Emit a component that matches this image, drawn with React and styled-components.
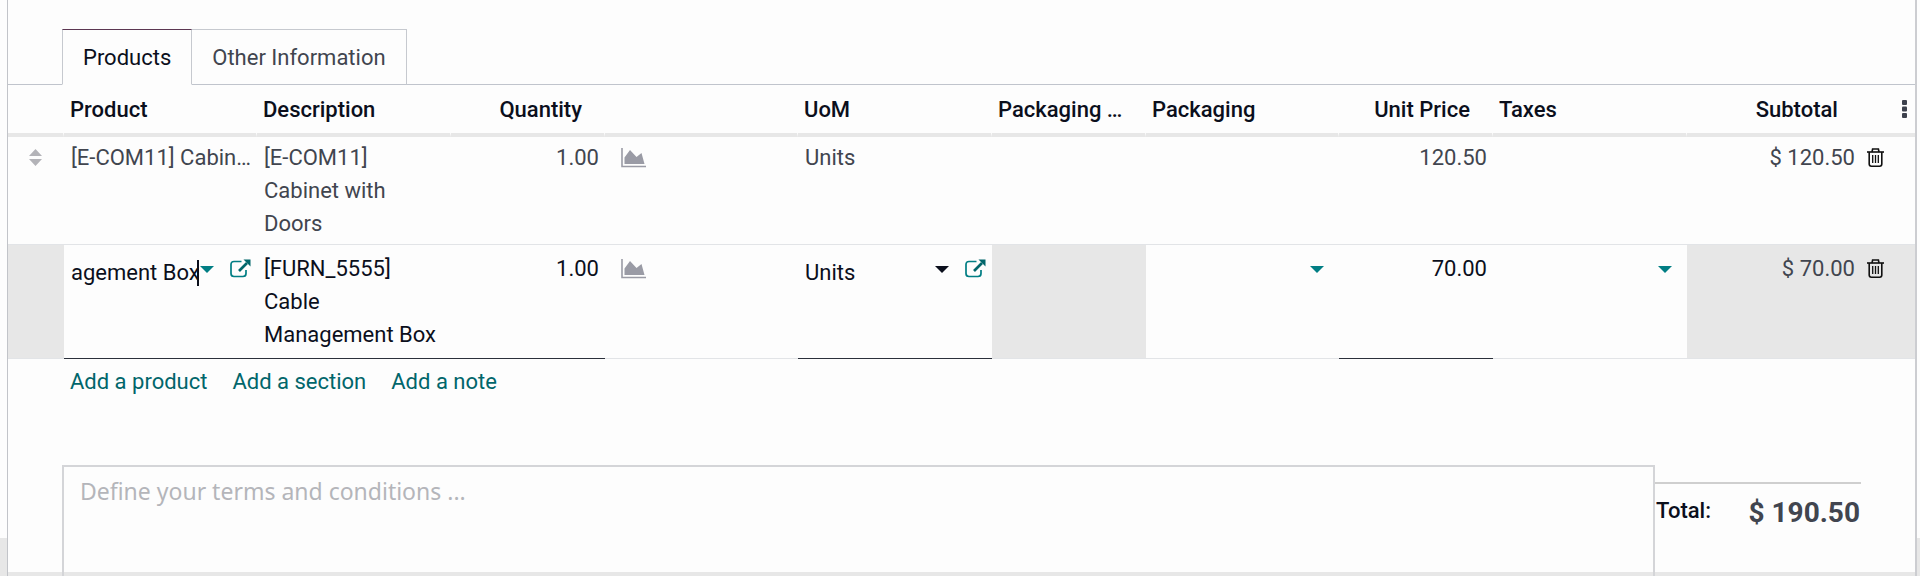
import React from 'react'
import { useState } from 'react';
import styled, { createGlobalStyle } from 'styled-components'

const columns=[56,193,194,154,193,194,154,193,154,194,173,55];

function AreaChartIcon() {
  return (
    <svg width="25" height="20" viewBox="0 0 25 20" aria-hidden="true">
        <path d="M1 0V18.5H25" fill="none" stroke="#9a9ba5" strokeWidth="1.6"/>
        <path d="M3.5 16V9.5L9 2L15.5 9L20.5 5L23.5 16Z" fill="#9a9ba5"/>
    </svg>
  )
}

function ExternalLinkIcon() {
  return (
    <svg width="21" height="19" viewBox="0 0 21 19" aria-hidden="true">
        <path d="M11.5 2.5H4Q1 2.5 1 5.5V14.5Q1 17.5 4 17.5H13Q16 17.5 16 14.5V11" fill="none" stroke="#017e84" strokeWidth="1.7"/>
        <path d="M9 12L17 4" fill="none" stroke="#01666b" strokeWidth="2.6"/>
        <path d="M13.5 0.5H20.5V7.5Z" fill="#01666b"/>
    </svg>
  )
}

function TrashIcon() {
  return (
    <svg width="17" height="19" viewBox="0 0 17 19" aria-hidden="true">
        <g fill="none" stroke="#111" strokeWidth="1.6">
            <path d="M0 4H17"/>
            <path d="M5 4L5.6 1H11.4L12 4"/>
            <path d="M2.2 4V16Q2.2 18.2 4.4 18.2H12.6Q14.8 18.2 14.8 16V4"/>
            <path d="M5.7 7V15M8.5 7V15M11.3 7V15" strokeWidth="1.3"/>
        </g>
    </svg>
  )
}

function SortIcon() {
  return (
    <svg width="13" height="17" viewBox="0 0 13 17" aria-hidden="true">
        <path d="M6.5 0L13 7H0ZM0 10H13L6.5 17Z" fill="#b3b3b8"/>
    </svg>
  )
}

function DotsIcon() {
  return (
    <svg width="5" height="18" viewBox="0 0 5 18" aria-hidden="true">
        <g fill="#3d414d">
            <rect width="5" height="5" rx="1"/>
            <rect y="6.5" width="5" height="5" rx="1"/>
            <rect y="13" width="5" height="5" rx="1"/>
        </g>
    </svg>
  )
}

function App() {

    const [product, setProduct]=useState('agement Box');
    const [uom, setUom]=useState('Units');
    const [quantity, setQuantity]=useState('1.00');
    const [price, setPrice]=useState('70.00');
    const [packaging, setPackaging]=useState('');
    const [taxes, setTaxes]=useState('');
    const [description, setDescription]=useState('[FURN_5555] Cable Management Box');
    const [terms, setTerms]=useState('');

  return (
    <Page>
        <GlobalStyle/>
        <Sheet>
            <Tabs role="tablist">
                <Tab role="tab" aria-selected="true" $active>Products</Tab>
                <Tab role="tab" aria-selected="false">Other Information</Tab>
            </Tabs>
            <Table>
                <colgroup>
                    {columns.map((w,i)=><Col key={i} $width={w}/>)}
                </colgroup>
                <thead>
                    <tr>
                        <Th></Th>
                        <Th>Product</Th>
                        <Th>Description</Th>
                        <Th $right>Quantity</Th>
                        <Th></Th>
                        <Th>UoM</Th>
                        <Th>Packaging Quantity</Th>
                        <Th>Packaging</Th>
                        <Th $right>Unit Price</Th>
                        <Th>Taxes</Th>
                        <Th $right $joined>Subtotal</Th>
                        <Th $right $last><IconButton aria-label="Optional columns"><DotsIcon/></IconButton></Th>
                    </tr>
                </thead>
                <tbody>
                    <tr>
                        <Td $handle><IconButton aria-label="Move line"><SortIcon/></IconButton></Td>
                        <Td><Ellipsis>[E-COM11] Cabinet with Doors</Ellipsis></Td>
                        <Td>[E-COM11] Cabinet with Doors</Td>
                        <Td $right>1.00</Td>
                        <Td $forecast><IconButton aria-label="Forecast"><AreaChartIcon/></IconButton></Td>
                        <Td>Units</Td>
                        <Td></Td>
                        <Td></Td>
                        <Td $right>120.50</Td>
                        <Td></Td>
                        <Td $right $joined>$ 120.50</Td>
                        <Td $trash><IconButton aria-label="Delete line"><TrashIcon/></IconButton></Td>
                    </tr>
                    <EditRow>
                        <Td $muted></Td>
                        <Td $required>
                            <Field>
                                <Combo>
                                    <LineInput aria-label="Product" value={product} onChange={(e)=>setProduct(e.target.value)}/>
                                    <TextCursor/>
                                    <Caret/>
                                </Combo>
                                <IconButton aria-label="Open product"><ExternalLinkIcon/></IconButton>
                            </Field>
                        </Td>
                        <Td $required>
                            <DescriptionInput aria-label="Description" rows="3" value={description} onChange={(e)=>setDescription(e.target.value)}/>
                        </Td>
                        <Td $required><NumberInput aria-label="Quantity" value={quantity} onChange={(e)=>setQuantity(e.target.value)}/></Td>
                        <Td $forecast><IconButton aria-label="Forecast"><AreaChartIcon/></IconButton></Td>
                        <Td $required>
                            <Field>
                                <Combo>
                                    <LineInput aria-label="UoM" value={uom} onChange={(e)=>setUom(e.target.value)}/>
                                    <Caret $dark/>
                                </Combo>
                                <IconButton aria-label="Open unit"><ExternalLinkIcon/></IconButton>
                            </Field>
                        </Td>
                        <Td $muted></Td>
                        <Td>
                            <Combo $inset>
                                <LineInput aria-label="Packaging" value={packaging} onChange={(e)=>setPackaging(e.target.value)}/>
                                <Caret/>
                            </Combo>
                        </Td>
                        <Td $required $right><NumberInput aria-label="Unit Price" value={price} onChange={(e)=>setPrice(e.target.value)}/></Td>
                        <Td>
                            <Combo $inset>
                                <LineInput aria-label="Taxes" value={taxes} onChange={(e)=>setTaxes(e.target.value)}/>
                                <Caret/>
                            </Combo>
                        </Td>
                        <Td $muted $right $joined>$ 70.00</Td>
                        <Td $muted $trash><IconButton aria-label="Delete line"><TrashIcon/></IconButton></Td>
                    </EditRow>
                </tbody>
            </Table>
            <AddLinks>
                <AddLink href="#product">Add a product</AddLink>
                <AddLink href="#section">Add a section</AddLink>
                <AddLink href="#note">Add a note</AddLink>
            </AddLinks>
            <Footer>
                <Terms aria-label="Terms and conditions" placeholder="Define your terms and conditions ..." value={terms} onChange={(e)=>setTerms(e.target.value)}/>
                <Totals>
                    <TotalLabel>Total:</TotalLabel>
                    <TotalAmount>$ 190.50</TotalAmount>
                </Totals>
            </Footer>
        </Sheet>
    </Page>
  )
}


const GlobalStyle=createGlobalStyle`
    *{
        box-sizing:border-box;
    }
    body{
        margin:0;
        font-family:Roboto, "Liberation Sans", sans-serif;
        font-size:22px;
        line-height:33px;
        color:#41454f;
    }
    button, input, textarea{
        font:inherit;
        color:inherit;
        border:none;
        background:none;
        padding:0;
        margin:0;
        outline:none;
    }
`;
const Page=styled.div`
    display:flex;
    min-height:100vh;
    padding:0 3px 0 7px;
    background:linear-gradient(to top, #e7e7e7 38px, #fdfdfd 38px);
`;
const Sheet=styled.main`
    flex:1;
    min-width:0;
    display:flex;
    flex-direction:column;
    padding-top:29px;
    border-left:1px solid #c2c4c9;
    border-right:2px solid #cccdd1;
    background:linear-gradient(to top, #e7e7e7 4px, #fdfdfd 4px);
`;
const Tabs=styled.div`
    display:flex;
    height:56px;
    padding-left:54px;
    border-bottom:1px solid #c0c4cc;
`;
const Tab=styled.button`
    height:56px;
    padding:1px 20px 0;
    border:1px solid #c6c9cf;
    border-top-color:${(p)=>p.$active ? '#5c3652' : '#c6c9cf'};
    border-bottom-color:${(p)=>p.$active ? '#fdfdfd' : '#c0c4cc'};
    color:${(p)=>p.$active ? '#0b0f1c' : '#41454f'};
    cursor:pointer;
        & + &{
            border-left:none;
        }
`;
const Table=styled.table`
    width:100%;
    table-layout:fixed;
    border-collapse:separate;
    border-spacing:0;
`;
const Col=styled.col`
    width:${(p)=>p.$width / 19.07}%;
`;
const Th=styled.th`
    height:52px;
    padding:0 ${(p)=>p.$last ? '8px' : '22px'} 0 6px;
    border-bottom:4px solid #e7e7e7;
    border-right:${(p)=>p.$last || p.$joined ? 'none' : '1px solid #fdfdfd'};
    font-weight:500;
    text-align:${(p)=>p.$right ? 'right' : 'left'};
    color:#0b0f1c;
    white-space:nowrap;
    overflow:hidden;
    text-overflow:ellipsis;
`;
const Td=styled.td`
    padding:4px ${(p)=>p.$joined ? '5px' : '6px'} 4px ${(p)=>p.$forecast ? '16px' : p.$handle ? '21px' : '7px'};
    vertical-align:top;
    text-align:${(p)=>p.$right ? 'right' : 'left'};
    background:${(p)=>p.$muted ? '#e7e7e7' : 'transparent'};
    border-bottom:1px solid ${(p)=>p.$required ? '#2b303b' : '#e2e4e7'};
`;
const EditRow=styled.tr`
    ${Td}{
        padding-top:7px;
        padding-bottom:7px;
    }
`;
const IconButton=styled.button`
    display:inline-flex;
    align-items:center;
    height:33px;
    vertical-align:top;
    cursor:pointer;
`;
const Ellipsis=styled.div`
    white-space:nowrap;
    overflow:hidden;
    text-overflow:ellipsis;
`;
const Field=styled.div`
    display:flex;
    align-items:flex-start;
    gap:16px;
`;
const Combo=styled.div`
    flex:1;
    min-width:0;
    display:flex;
    align-items:center;
    padding-right:${(p)=>p.$inset ? '9px' : '0'};
`;
const LineInput=styled.input`
    flex:1;
    min-width:0;
    height:41px;
    color:#0b0f1c;
`;
const TextCursor=styled.span`
    width:2px;
    height:26px;
    margin-right:1px;
    background:#0b0f1c;
`;
const Caret=styled.span`
    height:7px;
    margin-bottom:6px;
    border:7px solid transparent;
    border-top-color:${(p)=>p.$dark ? '#0b0f1c' : '#017e84'};
    border-bottom:none;
`;
const DescriptionInput=styled.textarea`
    display:block;
    width:100%;
    height:99px;
    resize:none;
    overflow:hidden;
    color:#0b0f1c;
`;
const NumberInput=styled.input`
    display:block;
    width:100%;
    height:33px;
    text-align:right;
    color:#0b0f1c;
`;
const AddLinks=styled.div`
    display:flex;
    gap:25px;
    padding:6px 62px 67px;
`;
const AddLink=styled.a`
    color:#01666b;
    text-decoration:none;
`;
const Footer=styled.div`
    flex:1;
    display:flex;
    align-items:flex-start;
    padding:0 54px;
`;
const Terms=styled.textarea`
    flex:1;
    align-self:stretch;
    min-width:0;
    padding:8px 16px;
    border:2px solid #d4d5d8;
    border-bottom:none;
    resize:none;
    font-family:"Noto Sans", sans-serif;
    font-size:23px;
        &::placeholder{
            color:#b4b5ba;
            opacity:1;
        }
`;
const Totals=styled.div`
    display:flex;
    justify-content:space-between;
    width:206px;
    margin-top:17px;
    padding:10px 1px;
    border-top:2px solid #cfcfcf;
`;
const TotalLabel=styled.span`
    font-weight:500;
    color:#0b0f1c;
`;
const TotalAmount=styled.strong`
    font-size:28px;
    line-height:38px;
    font-weight:700;
`;
export default App
